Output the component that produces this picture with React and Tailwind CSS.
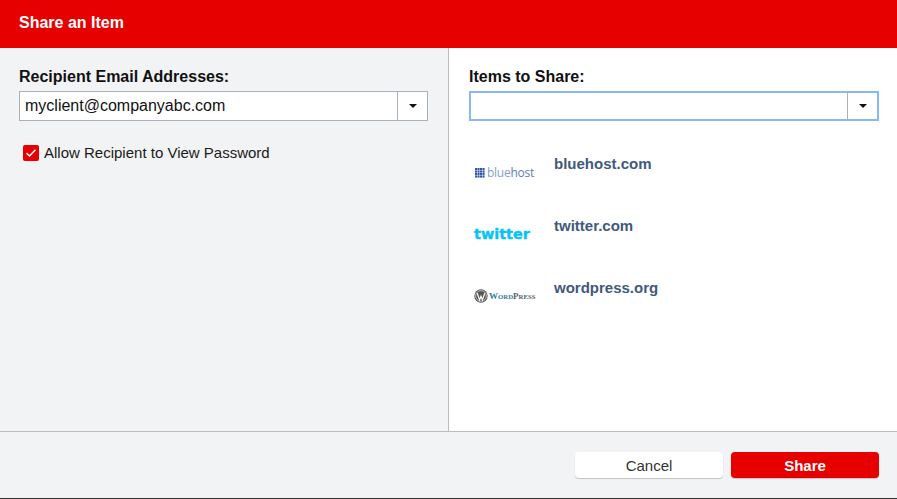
import React from "react";

const items = [
  { name: "bluehost.com", logo: <BluehostLogo /> },
  { name: "twitter.com", logo: <TwitterLogo /> },
  { name: "wordpress.org", logo: <WordpressLogo /> },
];

function BluehostLogo() {
  const cells = [0, 1, 2, 3];
  return (
    <div className="flex items-center gap-[2px] pt-[3px] pl-[1px]">
      <svg width="10" height="10" viewBox="0 0 10 10">
        {cells.map((r) =>
          cells.map((c) => (
            <rect key={`${r}-${c}`} x={c * 2.5} y={r * 2.5} width="2.1" height="2.1" fill="#3457a8" />
          ))
        )}
      </svg>
      <span className="text-[12px] leading-none tracking-[-0.25px] text-[#86a0d0] font-['Open_Sans',sans-serif]">
        blue<span className="text-[#5f7dba]">host</span>
      </span>
    </div>
  );
}

function TwitterLogo() {
  return (
    <div className="pt-[3px] text-[14px] leading-none font-bold text-[#08c3f7] [-webkit-text-stroke:0.4px_#08c3f7] font-['DejaVu_Sans',sans-serif] scale-x-[1.03] origin-left whitespace-nowrap">
      twitter
    </div>
  );
}

function WordpressLogo() {
  return (
    <div className="flex items-center gap-[1px] pt-[3px]">
      <svg width="14" height="14" viewBox="0 0 14 14">
        <circle cx="7" cy="7" r="6.7" fill="#555555" />
        <circle cx="7" cy="7" r="5.4" fill="none" stroke="#ffffff" strokeWidth="0.6" />
        <path d="M3.2 4.2 L5.6 11 L7 7.2 L8.4 11 L10.8 4.2" fill="none" stroke="#ffffff" strokeWidth="1.2" />
      </svg>
      <span className="text-[6.8px] leading-none font-bold whitespace-nowrap text-[#5b6470] font-['Liberation_Serif',serif]">
        <span className="text-[#2e7d9a]">
          <span className="text-[9px]">W</span>ORD
        </span>
        <span className="text-[9px]">P</span>RESS
      </span>
    </div>
  );
}

function Combo({ value, focused }) {
  return (
    <div
      className={`flex h-[30px] bg-white ${
        focused ? "border-2 border-[#8ab8f2]" : "border border-[#a9afbc]"
      }`}
    >
      <div className="flex-1 pl-[5px] text-[16px] leading-[27px] text-[#111111]">{value}</div>
      <div className="flex w-[30px] items-center justify-center border-l border-[#a9afbc]">
        <div className="h-0 w-0 border-x-[4px] border-t-[4px] border-x-transparent border-t-[#111111]" />
      </div>
    </div>
  );
}

export default function App() {
  return (
    <div className="flex h-[499px] w-[897px] flex-col overflow-hidden bg-white font-['Liberation_Sans',Arial,sans-serif]">
      <header className="flex h-12 items-center bg-[#e60000] px-[19px] pb-[2px] text-[16px] font-bold text-white">
        Share an Item
      </header>

      <main className="flex h-[383px]">
        <section className="w-[449px] border-r border-[#b9bcc2] bg-[#f2f3f5] pt-[19px] pr-[20px] pl-[19px]">
          <h2 className="mb-[4px] text-[16px] leading-[20px] font-bold text-[#111111]">Recipient Email Addresses:</h2>
          <Combo value="myclient@companyabc.com" />
          <label className="mt-[24px] ml-[4px] flex items-center gap-[5px] text-[15px] leading-[16px] text-[#1a1a1a]">
            <span className="flex h-4 w-4 items-center justify-center rounded-[2px] bg-[#e60000]">
              <svg width="12" height="10" viewBox="0 0 12 10">
                <path d="M1.5 5.2 L4.5 8 L10.5 1.8" fill="none" stroke="#ffffff" strokeWidth="1.6" />
              </svg>
            </span>
            Allow Recipient to View Password
          </label>
        </section>

        <section className="flex-1 bg-white pt-[19px] pr-[18px] pl-[20px]">
          <h2 className="mb-[4px] text-[16px] leading-[20px] font-bold text-[#111111]">Items to Share:</h2>
          <Combo value="" focused />
          <ul className="mt-[34px] flex flex-col gap-[38px] pl-[5px]">
            {items.map((item) => (
              <li key={item.name} className="flex h-[24px]">
                <div className="flex w-[80px] items-end">{item.logo}</div>
                <div className="text-[15px] leading-[18px] font-bold text-[#3f5a7d]">{item.name}</div>
              </li>
            ))}
          </ul>
        </section>
      </main>

      <footer className="flex flex-1 items-start justify-end gap-2 border-t border-b border-t-[#b9bcc2] border-b-[#333333] bg-[#f2f3f5] pt-[20px] pr-[18px]">
        <button className="h-[26px] w-[148px] rounded-[4px] bg-white pt-[2px] text-[15px] text-[#333333] shadow-[0_1px_1px_rgba(0,0,0,0.2)]">
          Cancel
        </button>
        <button className="h-[26px] w-[148px] rounded-[4px] bg-[#e60000] pt-[2px] text-[15px] font-bold text-white shadow-[0_1px_1px_rgba(0,0,0,0.2)]">
          Share
        </button>
      </footer>
    </div>
  );
}
